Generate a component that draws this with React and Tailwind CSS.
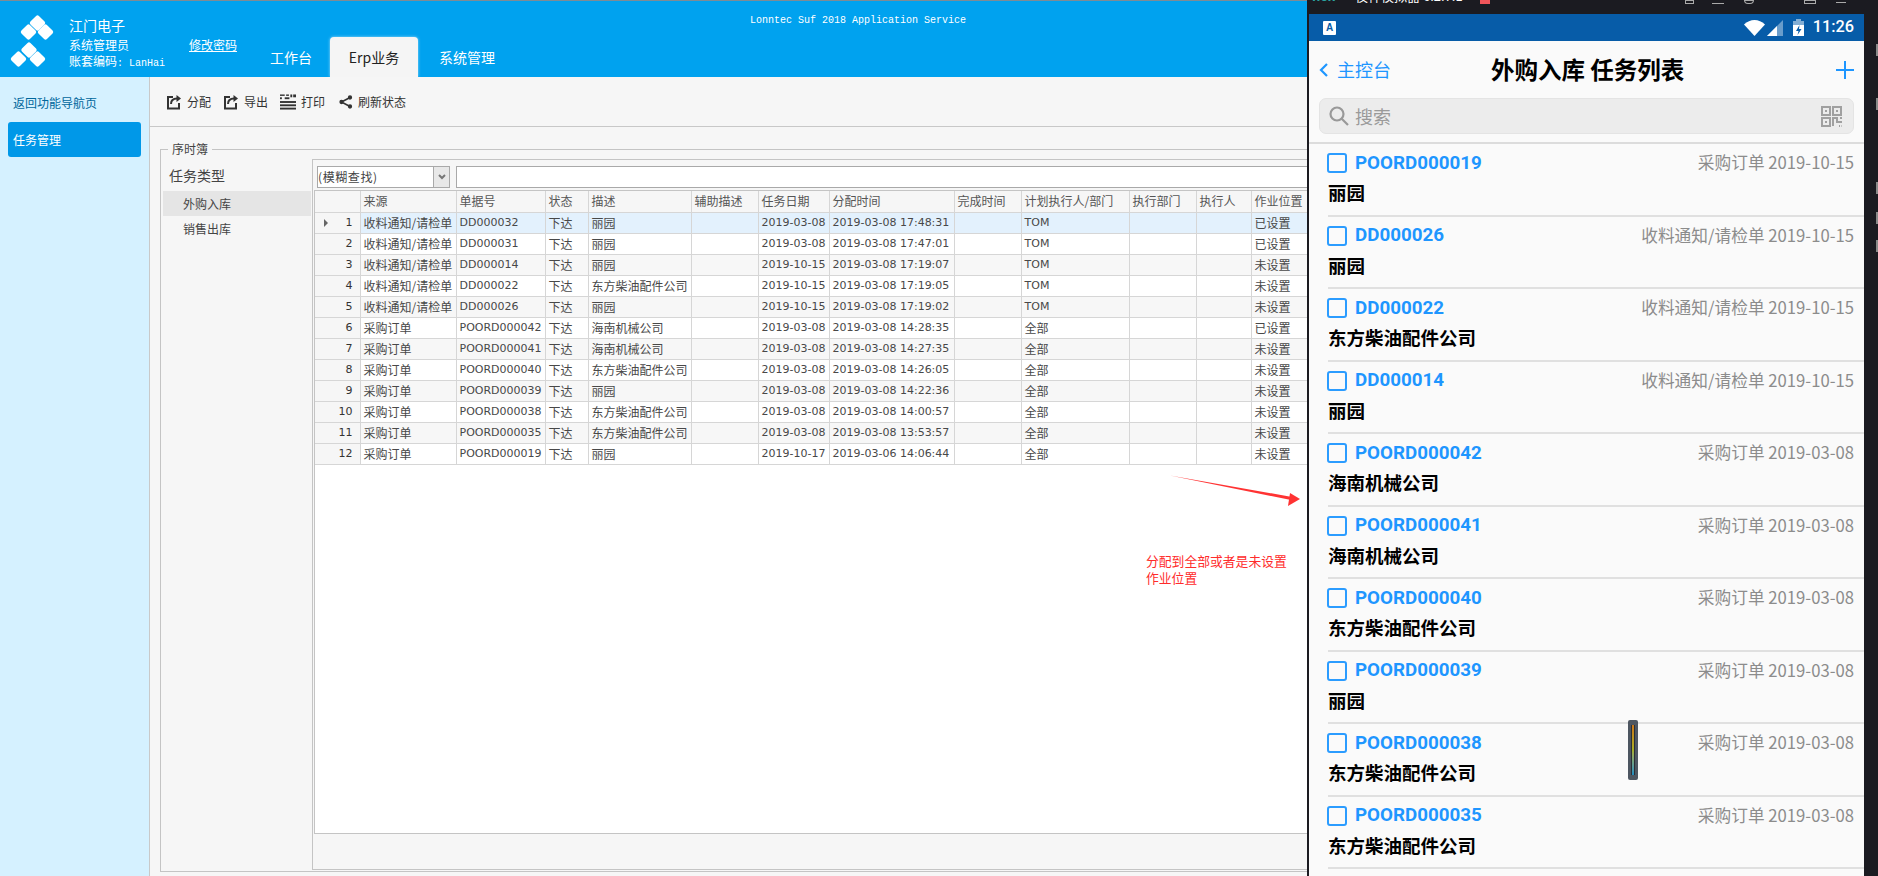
import React from 'react';

const columns = [
  { label: '', width: 45 },
  { label: '来源', width: 96, key: 'source' },
  { label: '单据号', width: 89, key: 'no', latin: true },
  { label: '状态', width: 43, key: 'status' },
  { label: '描述', width: 103, key: 'desc' },
  { label: '辅助描述', width: 67, key: 'extra' },
  { label: '任务日期', width: 71, key: 'date', latin: true },
  { label: '分配时间', width: 125, key: 'time', latin: true },
  { label: '完成时间', width: 67, key: 'done' },
  { label: '计划执行人/部门', width: 108, key: 'plan', latin: true },
  { label: '执行部门', width: 67, key: 'dept' },
  { label: '执行人', width: 55, key: 'person' },
  { label: '作业位置', width: 70, key: 'pos' },
];

const SHOU = '收料通知/请检单';
const CAI = '采购订单';
const LI = '丽园';
const DF = '东方柴油配件公司';
const HN = '海南机械公司';

const rows = [
  { source: SHOU, no: 'DD000032', desc: LI, date: '2019-03-08', time: '2019-03-08 17:48:31', plan: 'TOM', pos: '已设置' },
  { source: SHOU, no: 'DD000031', desc: LI, date: '2019-03-08', time: '2019-03-08 17:47:01', plan: 'TOM', pos: '已设置' },
  { source: SHOU, no: 'DD000014', desc: LI, date: '2019-10-15', time: '2019-03-08 17:19:07', plan: 'TOM', pos: '未设置' },
  { source: SHOU, no: 'DD000022', desc: DF, date: '2019-10-15', time: '2019-03-08 17:19:05', plan: 'TOM', pos: '未设置' },
  { source: SHOU, no: 'DD000026', desc: LI, date: '2019-10-15', time: '2019-03-08 17:19:02', plan: 'TOM', pos: '未设置' },
  { source: CAI, no: 'POORD000042', desc: HN, date: '2019-03-08', time: '2019-03-08 14:28:35', plan: '全部', pos: '已设置' },
  { source: CAI, no: 'POORD000041', desc: HN, date: '2019-03-08', time: '2019-03-08 14:27:35', plan: '全部', pos: '未设置' },
  { source: CAI, no: 'POORD000040', desc: DF, date: '2019-03-08', time: '2019-03-08 14:26:05', plan: '全部', pos: '未设置' },
  { source: CAI, no: 'POORD000039', desc: LI, date: '2019-03-08', time: '2019-03-08 14:22:36', plan: '全部', pos: '未设置' },
  { source: CAI, no: 'POORD000038', desc: DF, date: '2019-03-08', time: '2019-03-08 14:00:57', plan: '全部', pos: '未设置' },
  { source: CAI, no: 'POORD000035', desc: DF, date: '2019-03-08', time: '2019-03-08 13:53:57', plan: '全部', pos: '未设置' },
  { source: CAI, no: 'POORD000019', desc: LI, date: '2019-10-17', time: '2019-03-06 14:06:44', plan: '全部', pos: '未设置' },
];

const tasks = [
  { no: 'POORD000019', meta: '采购订单 2019-10-15', name: LI },
  { no: 'DD000026', meta: '收料通知/请检单 2019-10-15', name: LI },
  { no: 'DD000022', meta: '收料通知/请检单 2019-10-15', name: DF },
  { no: 'DD000014', meta: '收料通知/请检单 2019-10-15', name: LI },
  { no: 'POORD000042', meta: '采购订单 2019-03-08', name: HN },
  { no: 'POORD000041', meta: '采购订单 2019-03-08', name: HN },
  { no: 'POORD000040', meta: '采购订单 2019-03-08', name: DF },
  { no: 'POORD000039', meta: '采购订单 2019-03-08', name: LI },
  { no: 'POORD000038', meta: '采购订单 2019-03-08', name: DF },
  { no: 'POORD000035', meta: '采购订单 2019-03-08', name: DF },
];

const Logo = () => (
  <svg width="50" height="56" viewBox="10 12 50 56" fill="#fff">
    {[[37.5, 22], [45.5, 31], [28.5, 31], [29, 49], [37.5, 58], [18.5, 58]].map(([x, y]) => (
      <rect key={`${x}-${y}`} x={x - 6} y={y - 6} width="12" height="12" rx="2" transform={`rotate(45 ${x} ${y})`} />
    ))}
  </svg>
);

const ExportIcon = () => (
  <svg width="16" height="16" viewBox="0 0 16 16" fill="none" stroke="#333" strokeWidth="2">
    <path d="M7 3H2v11.5h11V9" />
    <path d="M5 10c0-3 2-5.500 6-5.500" />
    <path d="M10.500 1l4.500 3.500-4.500 3.500z" fill="#333" stroke="none" />
  </svg>
);

const PrintIcon = () => (
  <svg width="16" height="16" viewBox="0 0 17 16" fill="#333">
    <rect x="0" y="0" width="5" height="1.500" />
    <rect x="6.500" y="0" width="3" height="1.500" />
    <rect x="11" y="0" width="2" height="3" />
    <rect x="14" y="0" width="3" height="3" />
    <rect x="0" y="3" width="2" height="2" />
    <rect x="5" y="3" width="5" height="2" />
    <rect x="0" y="7" width="17" height="2" />
    <rect x="0" y="10.500" width="17" height="2" />
    <rect x="0" y="14" width="17" height="2" />
  </svg>
);

const ShareIcon = () => (
  <svg className="ml-[2px]" width="14" height="14" viewBox="0 0 14 14" fill="#333" stroke="#333" strokeWidth="1.500">
    <circle cx="2.500" cy="7" r="1.400" />
    <circle cx="11" cy="2.500" r="1.400" />
    <circle cx="11" cy="11.500" r="1.400" />
    <path d="M2.500 7L11 2.500M2.500 7L11 11.500" fill="none" />
  </svg>
);

const ToolButton = ({ icon, label, className }) => (
  <div className={`flex items-center gap-[5px] ${className}`}>
    {icon}
    <span className="text-[12px] text-[#333]">{label}</span>
  </div>
);

const DataGrid = () => (
  <div className="h-[644px] overflow-hidden border-t border-b border-l border-[#c4c4c4] bg-white">
    <table className="w-[1006px] table-fixed border-collapse text-[12px] leading-[20px] text-[#484848]">
      <colgroup>
        {columns.map((col, i) => (
          <col key={i} style={{ width: col.width }} />
        ))}
      </colgroup>
      <thead>
        <tr className="h-[21px] bg-[#f6f6f6] text-[#555]">
          {columns.map((col, i) => (
            <th key={i} className="border-r border-b border-[#d6d6d6] px-[3px] text-left font-normal whitespace-nowrap overflow-hidden">
              {col.label}
            </th>
          ))}
        </tr>
      </thead>
      <tbody>
        {rows.map((row, index) => (
          <tr key={index} className={`h-[21px] ${index === 0 ? 'bg-[#e3f1fd]' : index % 2 === 0 ? 'bg-[#f7f7f7]' : 'bg-white'}`}>
            <td className="border-r border-b border-[#d6d6d6] bg-[#f6f6f6] pr-[7px]">
              <div className="flex items-center justify-end font-['DejaVu_Sans',sans-serif] text-[11px] text-[#333]">
                {index === 0 && <span className="mr-auto ml-[9px] h-0 w-0 border-y-[4px] border-l-[4px] border-y-transparent border-l-[#666]" />}
                {index + 1}
              </div>
            </td>
            {columns.slice(1).map((col) => {
              const value = col.key === 'status' ? '下达' : row[col.key] || '';
              const isLatin = col.latin && /^[A-Z0-9]/.test(value);
              return (
                <td
                  key={col.key}
                  className={`border-r border-b border-[#d6d6d6] px-[3px] whitespace-nowrap overflow-hidden ${isLatin ? "font-['DejaVu_Sans',sans-serif] text-[11px]" : ''}`}
                >
                  {value}
                </td>
              );
            })}
          </tr>
        ))}
      </tbody>
    </table>
  </div>
);

const ErpWindow = () => (
  <div className="flex min-w-0 flex-1 flex-col overflow-hidden">
    <header className="flex h-[77px] shrink-0 border-t border-[#7f8b94] bg-[#00a2ef] text-white">
      <div className="mt-[12px] ml-[10px] w-[59px] shrink-0">
        <Logo />
      </div>
      <div className="mt-[14px] w-[120px] shrink-0">
        <div className="text-[14px] leading-[20px]">江门电子</div>
        <div className="mt-[2px] text-[12px] leading-[16px]">系统管理员</div>
        <div className="text-[12px] leading-[16px] whitespace-nowrap">
          账套编码<span className="font-['Liberation_Mono',monospace] text-[10px]">: LanHai</span>
        </div>
      </div>
      <div className="mt-[36px] w-[81px] shrink-0 text-[12px] leading-[16px] underline">修改密码</div>
      <div className="flex w-[246px] shrink-0 items-end">
        <div className="flex h-[40px] w-[60px] items-center text-[14px]">工作台</div>
        <div className="flex h-[40px] w-[88px] items-center justify-center rounded-t-[4px] bg-[#f5f5f5] text-[14px] text-[#222] shadow-[0_0_3px_#9fdcfa]">
          Erp业务
        </div>
        <div className="ml-[21px] flex h-[40px] items-center text-[14px]">系统管理</div>
      </div>
      <div className="mt-[13px] ml-[234px] font-['Liberation_Mono',monospace] text-[10px] leading-[14px] whitespace-nowrap">
        Lonntec Suf 2018 Application Service
      </div>
    </header>

    <div className="flex min-h-0 flex-1">
      <aside className="w-[150px] shrink-0 border-r border-[#c9c9c9] bg-[#d5f1ff] pt-[18px]">
        <div className="ml-[13px] text-[12px] leading-[16px] text-[#00679c]">返回功能导航页</div>
        <div className="mt-[11px] ml-[8px] flex h-[35px] w-[133px] items-center rounded-[3px] bg-[#0098e8] pl-[5px] text-[12px] text-white">
          任务管理
        </div>
      </aside>

      <main className="flex min-w-0 flex-1 flex-col bg-[#f6f6f6]">
        <div className="flex h-[50px] shrink-0 items-center border-b border-[#c8c8c8] pl-[16px]">
          <ToolButton icon={<ExportIcon />} label="分配" className="w-[57px]" />
          <ToolButton icon={<ExportIcon />} label="导出" className="w-[57px]" />
          <ToolButton icon={<PrintIcon />} label="打印" className="w-[57px]" />
          <ToolButton icon={<ShareIcon />} label="刷新状态" />
        </div>

        <div className="min-h-0 flex-1 pt-[14px] pb-[4px] pl-[10px]">
          <fieldset className="-mr-[30px] flex h-full min-w-0 flex-col border border-[#c4c4c4]">
            <legend className="ml-[7px] px-[4px] text-[12px] leading-[16px] text-[#444]">序时簿</legend>
            <div className="mt-[2px] flex min-h-0 flex-1 pb-[1px]">
              <div className="w-[151px] shrink-0 pt-[7px]">
                <div className="ml-[8px] text-[14px] leading-[19px] text-[#444]">任务类型</div>
                <div className="mt-[6px] mr-[1px] ml-[2px] flex h-[25px] items-center bg-[#e5e5e5] pl-[20px] text-[12px] text-[#444]">外购入库</div>
                <div className="mr-[1px] ml-[2px] flex h-[25px] items-center pl-[20px] text-[12px] text-[#444]">销售出库</div>
              </div>
              <div className="min-w-0 flex-1 border-t border-b border-l border-[#c4c4c4]">
                <div className="flex h-[30px] items-start gap-[6px] pt-[6px] pl-[4px]">
                  <div className="flex h-[22px] w-[133px] shrink-0 border border-[#a9a9a9] bg-white text-[12px] leading-[20px] tracking-[0.6px] text-[#444]">
                    <span className="flex-1">(模糊查找)</span>
                    <span className="flex w-[16px] items-center justify-center border-l border-[#a9a9a9] bg-[#e8e8e8]">
                      <svg width="8" height="6" viewBox="0 0 8 6" fill="none" stroke="#777" strokeWidth="2"><path d="M1 1l3 3 3-3" /></svg>
                    </span>
                  </div>
                  <div className="h-[22px] flex-1 border border-[#a9a9a9] bg-white" />
                </div>
                <div className="ml-[1px]">
                  <DataGrid />
                </div>
              </div>
            </div>
          </fieldset>
        </div>
      </main>
    </div>
  </div>
);

const TaskRow = ({ task }) => (
  <div className="ml-[19px] h-[72.500px] shrink-0 border-b-2 border-[#e0e0e0] pt-[9px]">
    <div className="flex h-[20px] items-center pr-[10px]">
      <span className="-ml-[1px] h-[20px] w-[20px] shrink-0 rounded-[3px] border-2 border-[#2b9cff]" />
      <span className="ml-[8px] font-['Roboto',sans-serif] text-[18.800px] font-bold text-[#1e96ff]">{task.no}</span>
      <span className="ml-auto text-[16.700px] whitespace-nowrap text-[#8c8c8c]">{task.meta}</span>
    </div>
    <div className="mt-[5px] text-[18.500px] leading-[28px] font-bold text-black">{task.name}</div>
  </div>
);

const SIDE_MARKS = [30, 42, 72, 18, 16];

const Phone = () => (
  <div className="flex w-[571px] shrink-0 flex-col bg-[#1b1b21]">
    <div className="flex h-[14px] shrink-0 overflow-hidden pl-[5px] text-[13px] leading-[16px]">
      <span className="-mt-[12px] w-[34px] font-bold text-[#2aa5a0]">nox</span>
      <span className="-mt-[12px] ml-[9px] w-[118px] whitespace-nowrap text-white">夜神模拟器 6.2.7.1</span>
      <span className="ml-[7px] h-[4px] w-[10px] bg-[#f0555a]" />
      <span className="ml-[195px] h-[4px] w-[9px] border border-[#aaa]" />
      <span className="mt-[3px] ml-[18px] h-px w-[12px] bg-[#aaa]" />
      <span className="ml-[20px] h-[4px] w-[10px] rounded-b-full border border-[#aaa]" />
      <span className="ml-[50px] h-[4px] w-[12px] border border-[#aaa]" />
      <span className="ml-[20px] h-[3px] w-[10px] border-b border-[#aaa]" />
    </div>
    <div className="flex min-h-0 flex-1">
      <div className="ml-[2px] flex w-[555px] shrink-0 flex-col overflow-hidden bg-[#fafafa]">
        <div className="flex h-[27px] shrink-0 items-center bg-[#075ca8] pr-[10px] pl-[14px] text-white">
          <span className="flex h-[14px] w-[13px] items-center justify-center rounded-[1px] bg-white font-['Liberation_Sans',sans-serif] text-[10px] leading-none font-bold text-[#075ca8]">A</span>
          <svg className="ml-auto" width="21" height="16" viewBox="0 0 21 16" fill="#fff"><path d="M0 4.500C6-1.500 15-1.500 21 4.500L10.500 16z" /></svg>
          <svg className="ml-[2px]" width="16" height="16" viewBox="0 0 16 16"><path d="M16 0v16H0z" fill="#fff" fillOpacity=".4" /><path d="M10 6v10H0z" fill="#fff" /></svg>
          <svg className="ml-[10px]" width="11" height="17" viewBox="0 0 11 17"><path d="M3 0h5v2h3v15H0V2h3z" fill="#fff" fillOpacity=".5" /><path d="M0 6h11v11H0z" fill="#fff" /><path d="M6.500 6L3 12h2.500L4.500 16 8.500 10H6z" fill="#075ca8" /></svg>
          <span className="ml-[9px] font-['Roboto',sans-serif] text-[16.300px] font-medium">11:26</span>
        </div>
        <div className="flex h-[57px] shrink-0 items-center pr-[10px] pl-[10px]">
          <svg width="9" height="14" viewBox="0 0 9 14" fill="none" stroke="#1e96ff" strokeWidth="2.200"><path d="M8 1L2 7l6 6" /></svg>
          <span className="ml-[9px] w-[154px] text-[18px] text-[#1e96ff]">主控台</span>
          <span className="flex-1 text-[23.500px] font-bold whitespace-nowrap text-black">外购入库 任务列表</span>
          <svg width="18" height="18" viewBox="0 0 18 18" fill="none" stroke="#1e96ff" strokeWidth="2"><path d="M9 0v18M0 9h18" /></svg>
        </div>
        <div className="mx-[10px] flex h-[36px] shrink-0 items-center rounded-[7px] border border-[#e4e4e4] bg-[#ececec] pr-[11px] pl-[9px]">
          <svg width="20" height="20" viewBox="0 0 20 20" fill="none" stroke="#999" strokeWidth="2.200"><circle cx="8" cy="8" r="6.500" /><path d="M12.500 12.500L19 19" /></svg>
          <span className="ml-[6px] text-[18px] text-[#9a9a9a]">搜索</span>
          <svg className="ml-auto" width="21" height="21" viewBox="0 0 21 21" fill="none" stroke="#a0a0a0" strokeWidth="2">
            <rect x="1" y="1" width="8" height="8" />
            <rect x="12" y="1" width="8" height="8" />
            <rect x="1" y="12" width="8" height="8" />
            <path d="M12 20v-8h4v4h5M19 12h2M18 20h1M20.500 20h.5" />
            <path d="M4 4h2v2H4zM15 4h2v2h-2zM4 15h2v2H4z" fill="#a0a0a0" stroke="none" />
          </svg>
        </div>
        <div className="mt-[8px] flex min-h-0 flex-1 flex-col overflow-hidden border-t-2 border-[#dcdcdc]">
          {tasks.map((task) => (
            <TaskRow key={task.no} task={task} />
          ))}
        </div>
      </div>
      <div className="flex flex-1 flex-col items-end">
        {SIDE_MARKS.map((gap, i) => (
          <span key={i} className="h-[12px] w-[2px] bg-[#8a8a8a]" style={{ marginTop: gap }} />
        ))}
      </div>
    </div>
  </div>
);

export default function App() {
  return (
    <div className="relative flex h-[876px] w-[1878px] overflow-hidden bg-white font-['Noto_Sans_CJK_SC',sans-serif]">
      <ErpWindow />
      <Phone />

      {/* red note drawn over the screenshot */}
      <svg className="absolute top-[470px] left-[1165px]" width="140" height="36" viewBox="0 0 140 36">
        <path d="M5 5.500l122 21.500-1 3z" fill="#ff3333" />
        <path d="M135 29l-12 7 2-13z" fill="#ff3333" />
      </svg>
      <div className="absolute top-[552px] left-[1146px] text-[12.800px] leading-[17px] whitespace-nowrap text-[#ff2b2b]">
        分配到全部或者是未设置
        <br />
        作业位置
      </div>

      {/* floating emulator gauge */}
      <div className="absolute top-[720px] left-[1628px] flex h-[60px] w-[10px] justify-center rounded-[2px] bg-[#4d5661] py-[5px]">
        <div className="flex w-[4px] justify-center bg-[#2a2f36]">
          <div className="w-[2px] bg-gradient-to-b from-[#c9761a] via-[#a8ae24] to-[#1a8cc0]" />
        </div>
      </div>
    </div>
  );
}
